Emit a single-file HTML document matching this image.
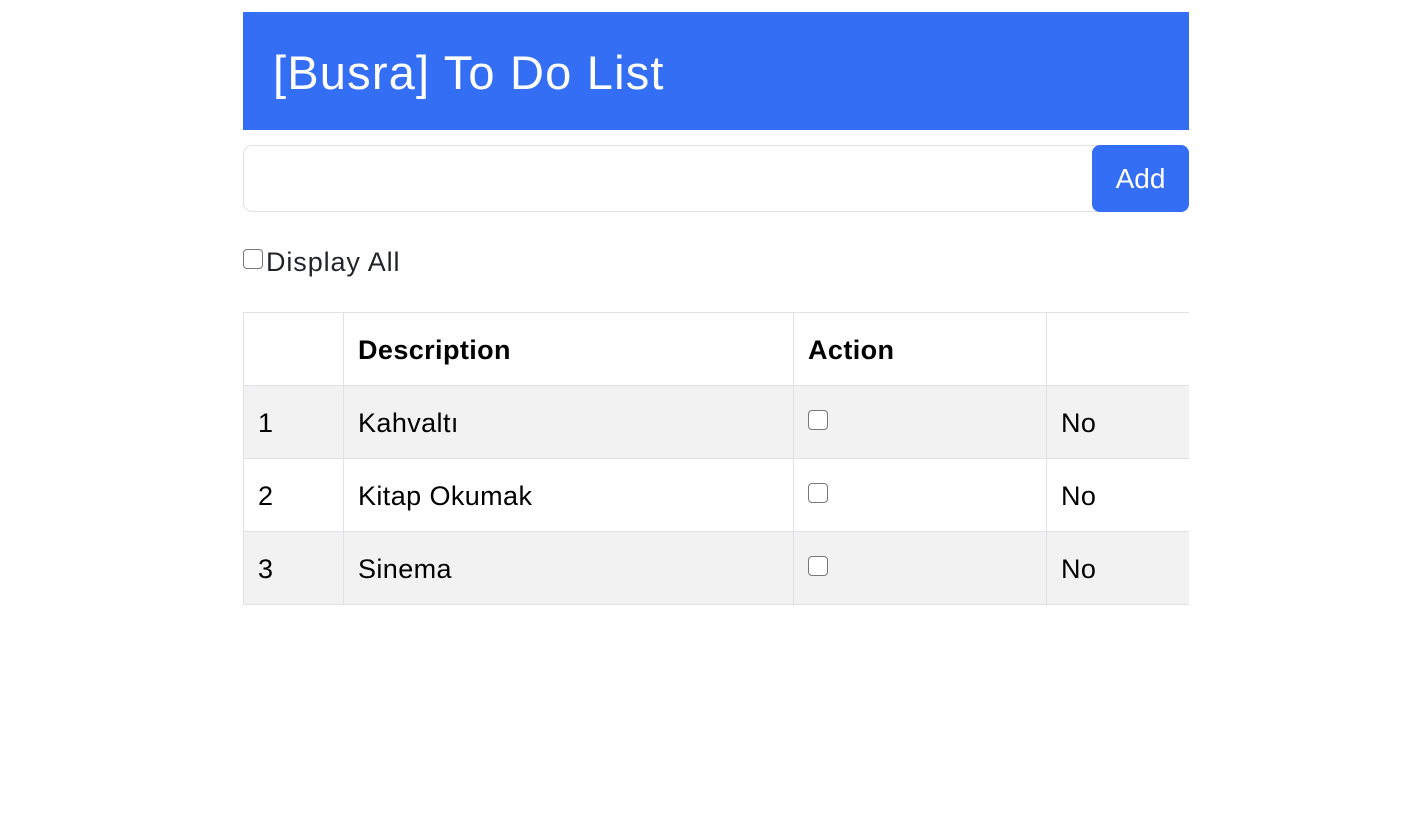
<!DOCTYPE html>
<html><head><style>
body{margin:0;background:#fff;font-family:"Liberation Sans",sans-serif;color:#000;}
.abs{position:absolute;}
.hdr{left:243px;top:12px;width:946px;height:118px;background:#346ef5;}
.hdr span{position:absolute;left:30px;top:33px;font-size:47px;color:#fff;letter-spacing:1.2px;}
.inp{left:243px;top:145px;width:856px;height:65px;border:1px solid #dee2e6;border-radius:9px 0 0 9px;}
.btn{left:1092px;top:145px;width:97px;height:67px;background:#346ef5;border-radius:8px;color:#fff;font-size:28px;text-align:center;line-height:67px;}
.cb{width:18px;height:18px;border:1.5px solid #777;border-radius:4px;background:#fff;}
.lbl{left:266px;top:247px;font-size:27px;color:#212529;letter-spacing:0.9px;}
table{position:absolute;left:243px;top:312px;border-collapse:collapse;font-size:27px;letter-spacing:0.4px;}
td,th{border:1px solid #dee2e6;height:70px;padding:2px 14px 0;text-align:left;vertical-align:middle;}
th{font-weight:bold;}
tr.g td{background:#f2f2f2;}
td.r,th.r{border-right:none;}
</style></head><body>
<div class="abs hdr"><span>[Busra] To Do List</span></div>
<div class="abs inp"></div>
<div class="abs btn">Add</div>
<div class="abs cb" style="left:243px;top:249px"></div>
<div class="abs lbl">Display All</div>
<table>
<tr><th style="width:71px"></th><th style="width:421px">Description</th><th style="width:224px">Action</th><th class="r" style="width:114px"></th></tr>
<tr class="g"><td>1</td><td>Kahvaltı</td><td></td><td class="r">No</td></tr>
<tr><td>2</td><td>Kitap Okumak</td><td></td><td class="r">No</td></tr>
<tr class="g"><td>3</td><td>Sinema</td><td></td><td class="r">No</td></tr>
</table>
<div class="abs cb" style="left:808px;top:410px"></div>
<div class="abs cb" style="left:808px;top:483px"></div>
<div class="abs cb" style="left:808px;top:556px"></div>
</body></html>
